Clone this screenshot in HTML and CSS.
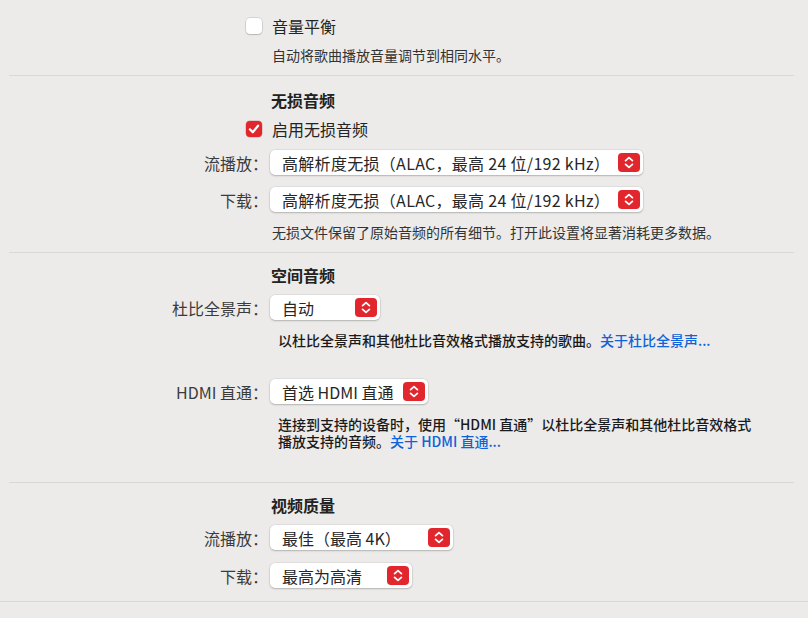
FILE: index.html
```html
<!DOCTYPE html>
<html lang="zh-CN">
<head>
  <meta charset="UTF-8">
  <meta name="viewport" content="width=device-width, initial-scale=1.0"/>
  <title>播放偏好设置</title>
  <link rel="stylesheet" href="styles.css">
</head>
<body>

  <main class="prefs">

    <!-- Sound Check -->
    <section class="group group-top">
      <div class="row row-check">
        <span class="check"></span>
        <span class="check-label">音量平衡</span>
      </div>
      <p class="note note-first">自动将歌曲播放音量调节到相同水平。</p>
    </section>
    <hr class="sep">

    <!-- Lossless -->
    <section class="group group-lossless">
      <h2 class="title">无损音频</h2>
      <div class="row row-check gap-9">
        <span class="check checked">
          <svg viewBox="0 0 16 16" width="16" height="16"><path d="M3.9 8.3 L6.8 11.3 L12.1 4.7" fill="none" stroke="#fff" stroke-width="2.2" stroke-linecap="round" stroke-linejoin="round"/></svg>
        </span>
        <span class="check-label">启用无损音频</span>
      </div>
      <div class="row row-popup gap-11">
        <span class="label">流播放：</span>
        <div class="popup popup-lossless">
          <span>高解析度无损（ALAC，最高 24 位/192 kHz）</span>
          <span class="stepper"><svg viewBox="0 0 22 19" width="22" height="19"><path d="M7.6 7.6 L11 4.6 L14.4 7.6 M7.6 11.4 L11 14.4 L14.4 11.4" fill="none" stroke="#fff" stroke-width="1.8" stroke-linecap="round" stroke-linejoin="round"/></svg></span>
        </div>
      </div>
      <div class="row row-popup gap-12">
        <span class="label">下载：</span>
        <div class="popup popup-lossless">
          <span>高解析度无损（ALAC，最高 24 位/192 kHz）</span>
          <span class="stepper"><svg viewBox="0 0 22 19" width="22" height="19"><path d="M7.6 7.6 L11 4.6 L14.4 7.6 M7.6 11.4 L11 14.4 L14.4 11.4" fill="none" stroke="#fff" stroke-width="1.8" stroke-linecap="round" stroke-linejoin="round"/></svg></span>
        </div>
      </div>
      <p class="note gap-11">无损文件保留了原始音频的所有细节。打开此设置将显著消耗更多数据。</p>
    </section>
    <hr class="sep">

    <!-- Spatial Audio -->
    <section class="group group-spatial">
      <h2 class="title">空间音频</h2>
      <div class="row row-popup gap-10">
        <span class="label">杜比全景声：</span>
        <div class="popup popup-auto">
          <span>自动</span>
          <span class="stepper"><svg viewBox="0 0 22 19" width="22" height="19"><path d="M7.6 7.6 L11 4.6 L14.4 7.6 M7.6 11.4 L11 14.4 L14.4 11.4" fill="none" stroke="#fff" stroke-width="1.8" stroke-linecap="round" stroke-linejoin="round"/></svg></span>
        </div>
      </div>
      <p class="note note-strong gap-11">以杜比全景声和其他杜比音效格式播放支持的歌曲。<a href="#">关于杜比全景声...</a></p>
      <div class="row row-popup gap-30">
        <span class="label">HDMI 直通：</span>
        <div class="popup popup-hdmi">
          <span>首选 HDMI 直通</span>
          <span class="stepper"><svg viewBox="0 0 22 19" width="22" height="19"><path d="M7.6 7.6 L11 4.6 L14.4 7.6 M7.6 11.4 L11 14.4 L14.4 11.4" fill="none" stroke="#fff" stroke-width="1.8" stroke-linecap="round" stroke-linejoin="round"/></svg></span>
        </div>
      </div>
      <p class="note note-strong note-two gap-12">连接到支持的设备时，使用“HDMI 直通”以杜比全景声和其他杜比音效格式<br>播放支持的音频。<a href="#">关于 HDMI 直通...</a></p>
    </section>
    <hr class="sep">

    <!-- Video Quality -->
    <section class="group group-video">
      <h2 class="title">视频质量</h2>
      <div class="row row-popup gap-10">
        <span class="label">流播放：</span>
        <div class="popup popup-best">
          <span>最佳（最高 4K）</span>
          <span class="stepper"><svg viewBox="0 0 22 19" width="22" height="19"><path d="M7.6 7.6 L11 4.6 L14.4 7.6 M7.6 11.4 L11 14.4 L14.4 11.4" fill="none" stroke="#fff" stroke-width="1.8" stroke-linecap="round" stroke-linejoin="round"/></svg></span>
        </div>
      </div>
      <div class="row row-popup gap-13">
        <span class="label">下载：</span>
        <div class="popup popup-hd">
          <span>最高为高清</span>
          <span class="stepper"><svg viewBox="0 0 22 19" width="22" height="19"><path d="M7.6 7.6 L11 4.6 L14.4 7.6 M7.6 11.4 L11 14.4 L14.4 11.4" fill="none" stroke="#fff" stroke-width="1.8" stroke-linecap="round" stroke-linejoin="round"/></svg></span>
        </div>
      </div>
    </section>
    <hr class="sep sep-full">

  </main>

</body>
</html>
```

FILE: styles.css
```css
/* Global Styles */
* {
  margin: 0;
  padding: 0;
  box-sizing: border-box;
}

body {
  font-family: "Noto Sans CJK SC", "Noto Sans", sans-serif;
  font-size: 16px;
  background-color: #ecebea;
  color: #242424;
  overflow: hidden;
}

/* Sections */
.group-top {
  padding: 16px 0 11px;
}

.group-lossless {
  padding: 14px 0 11px;
}

.group-spatial {
  padding: 12px 0 32px;
}

.group-video {
  padding: 12px 0 13px;
}

.sep {
  border: none;
  height: 1px;
  background: #d9d8d6;
  margin: 0 14px 0 9px;
}

.sep-full {
  margin: 0;
}

/* Rows: label column + control column */
.row {
  display: grid;
  grid-template-columns: 268px auto;
  column-gap: 2px;
  align-items: center;
}

.row-check {
  height: 20px;
}

.row-popup {
  height: 25px;
}

.gap-9 { margin-top: 9px; }
.gap-10 { margin-top: 10px; }
.gap-11 { margin-top: 11px; }
.gap-12 { margin-top: 12px; }
.gap-13 { margin-top: 13px; }
.gap-30 { margin-top: 30px; }

.title {
  margin-left: 271px;
  font-size: 16px;
  font-weight: 700;
  line-height: 20px;
  color: #222;
}

.label {
  text-align: right;
  line-height: 20px;
  color: #3b3b3b;
}

/* Checkbox */
.check {
  justify-self: end;
  margin-right: 6px;
  width: 16px;
  height: 16px;
  border-radius: 4px;
  background: #fff;
  box-shadow: 0 0 0 0.5px rgba(0, 0, 0, 0.18), 0 1px 1.5px rgba(0, 0, 0, 0.15);
  display: flex;
}

.check.checked {
  background: #e1272d;
  box-shadow: 0 0 0 0.5px rgba(160, 0, 0, 0.3);
}

.check-label {
  margin-left: 2px;
  line-height: 20px;
  color: #242424;
}

/* Notes */
.note {
  margin-left: 272px;
  font-size: 14px;
  line-height: 18px;
  color: #333;
}

.note-first {
  margin-top: 10px;
}

.note-strong {
  margin-left: 278px;
  font-weight: 500;
  color: #1a1a1a;
}

.note-two {
  line-height: 17px;
}

.note a {
  color: #0d63d9;
  text-decoration: none;
}

/* Pop-up buttons */
.popup {
  justify-self: start;
  display: flex;
  align-items: center;
  justify-content: space-between;
  height: 25px;
  padding: 0 3px 0 12px;
  background: #fff;
  border-radius: 5px;
  box-shadow: 0 0 0 0.5px rgba(0, 0, 0, 0.1), 0 1px 2px rgba(0, 0, 0, 0.2);
  line-height: 20px;
  color: #262626;
  white-space: nowrap;
}

.popup-lossless {
  width: 373px;
  letter-spacing: 0.3px;
}

.popup-auto { width: 110px; }
.popup-hdmi { width: 158px; }
.popup-best { width: 183px; }
.popup-hd { width: 142px; }

.stepper {
  width: 22px;
  height: 19px;
  border-radius: 4px;
  background: #e1272d;
  display: flex;
}
```
